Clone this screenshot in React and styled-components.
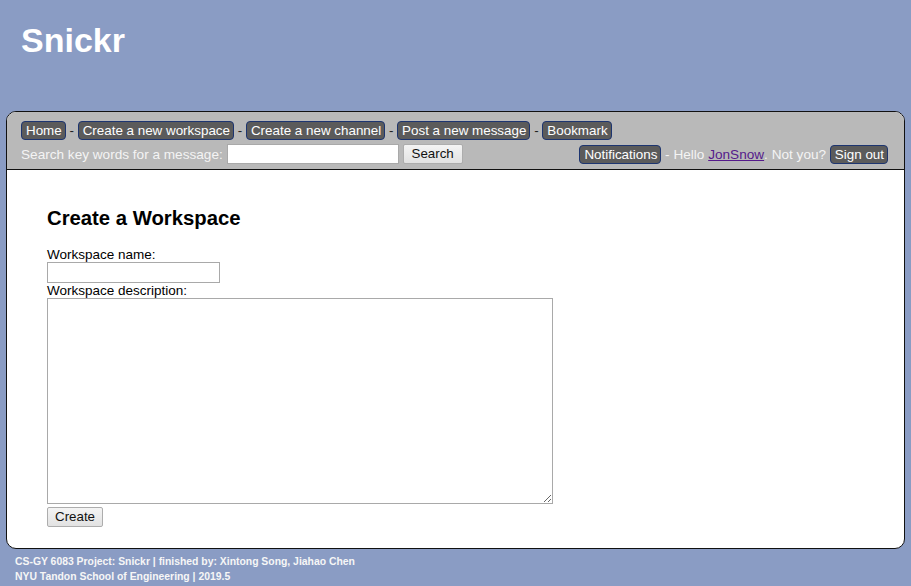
import React from "react";
import styled, { createGlobalStyle } from "styled-components";

const Global = createGlobalStyle`
  html, body { margin: 0; padding: 0; }
  body {
    background: #8a9cc4;
    font-family: "Liberation Sans", Arial, sans-serif;
    font-size: 13.5px;
  }
`;

const Page = styled.div`
  display: flex;
  flex-direction: column;
`;

const Top = styled.header`
  height: 111px;
  padding: 0 21px;
  box-sizing: border-box;
  display: flex;
  align-items: flex-start;
`;

const Title = styled.h1`
  margin: 20px 0 0;
  font-size: 34px;
  line-height: 40px;
  font-weight: bold;
  color: #fff;
`;

const Panel = styled.main`
  margin: 0 6px;
  border: 1px solid #111;
  border-radius: 10px;
  overflow: hidden;
  background: #fff;
`;

const Nav = styled.nav`
  background: #b9b9b9;
  border-bottom: 1px solid #111;
  padding: 9px 16px 5px 14px;
  display: flex;
  flex-direction: column;
  gap: 4px;
`;

const Row = styled.div`
  display: flex;
  align-items: center;
  justify-content: ${(p) => (p.$spread ? "space-between" : "flex-start")};
  height: ${(p) => p.$h || 19}px;
  white-space: pre;
`;

const Group = styled.div`
  display: flex;
  align-items: center;
  white-space: pre;
`;

const NavButton = styled.a`
  display: inline-block;
  background: #5b5b5b;
  color: #fff;
  border: 1px solid #1d3570;
  border-radius: 4px;
  padding: 0 3px 0 4px;
  line-height: 17px;
  font-size: 13.4px;
  text-decoration: none;
`;

const Sep = styled.span`
  color: #222;
  font-size: 13.4px;
`;

const Light = styled.span`
  color: #f4f4f4;
  font-size: 13.6px;
`;

const UserLink = styled.a`
  color: #551a8b;
  text-decoration: underline;
  font-size: 13.6px;
`;

const TextInput = styled.input`
  box-sizing: border-box;
  width: ${(p) => p.$w}px;
  height: ${(p) => p.$h || 20}px;
  border: 1px solid #a9a9a9;
  background: #fff;
  padding: 0 2px;
  margin: 0;
  font-family: inherit;
  font-size: 13px;
  outline: none;
`;

const Btn = styled.button`
  box-sizing: border-box;
  height: 20px;
  padding: 0 ${(p) => p.$px || 8}px;
  margin: 0 0 0 ${(p) => p.$ml || 0}px;
  border: 1px solid #adadad;
  border-radius: 2px;
  background: linear-gradient(#f4f4f4, #e2e2e2);
  font-family: "Liberation Sans", Arial, sans-serif;
  font-size: 13.33px;
  color: #111;
  line-height: 18px;
`;

const Content = styled.section`
  padding: 37px 40px 21px;
  display: flex;
  flex-direction: column;
  align-items: flex-start;
`;

const Heading = styled.h2`
  margin: 0 0 17px;
  font-size: 20.3px;
  line-height: 23px;
  font-weight: bold;
  color: #000;
`;

const Label = styled.label`
  font-size: 13.5px;
  line-height: 15px;
  color: #000;
`;

const Area = styled.textarea`
  box-sizing: border-box;
  width: 506px;
  height: 206px;
  border: 1px solid #a9a9a9;
  margin: 0 0 3px;
  padding: 2px;
  font-family: inherit;
  font-size: 13px;
  outline: none;
`;

const Footer = styled.footer`
  padding: 5px 15px 0;
  color: #f6f6f6;
  font-size: 10.4px;
  font-weight: bold;
  line-height: 15px;
`;

export default function App() {
  return (
    <Page>
      <Global />
      <Top>
        <Title>Snickr</Title>
      </Top>
      <Panel>
        <Nav>
          <Row>
            <NavButton href="#">Home</NavButton>
            <Sep> - </Sep>
            <NavButton href="#">Create a new workspace</NavButton>
            <Sep> - </Sep>
            <NavButton href="#">Create a new channel</NavButton>
            <Sep> - </Sep>
            <NavButton href="#">Post a new message</NavButton>
            <Sep> - </Sep>
            <NavButton href="#">Bookmark</NavButton>
          </Row>
          <Row $spread $h={20}>
            <Group>
              <Light>Search key words for a message: </Light>
              <TextInput $w={172} />
              <Btn $ml={4}>Search</Btn>
            </Group>
            <Group>
              <NavButton href="#">Notifications</NavButton>
              <Light> - Hello </Light>
              <UserLink href="#">JonSnow</UserLink>
              <Light>. Not you? </Light>
              <NavButton href="#">Sign out</NavButton>
            </Group>
          </Row>
        </Nav>
        <Content>
          <Heading>Create a Workspace</Heading>
          <Label>Workspace name:</Label>
          <TextInput $w={173} $h={21} />
          <Label>Workspace description:</Label>
          <Area />
          <Btn $px={7}>Create</Btn>
        </Content>
      </Panel>
      <Footer>
        <div>CS-GY 6083 Project: Snickr | finished by: Xintong Song, Jiahao Chen</div>
        <div>NYU Tandon School of Engineering | 2019.5</div>
      </Footer>
    </Page>
  );
}
